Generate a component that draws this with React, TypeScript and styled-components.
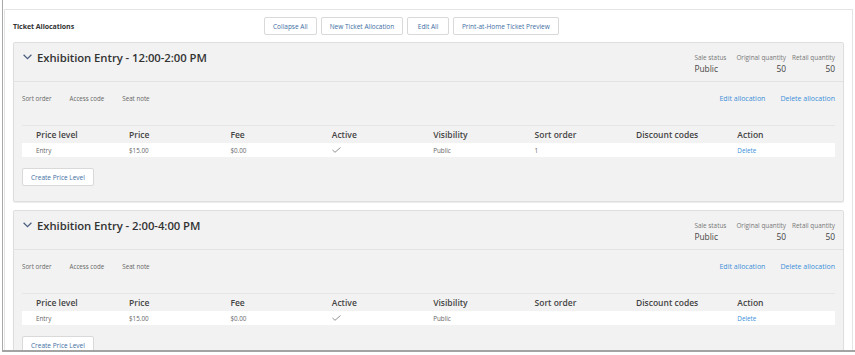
import styled, { createGlobalStyle } from 'styled-components'

const GlobalStyle = createGlobalStyle`
  html, body {
    margin: 0;
    padding: 0;
    background: #ffffff;
  }
  body {
    font-family: "Open Sans", "Noto Sans", sans-serif;
    color: #444;
  }
`

interface PriceRow {
  level: string
  price: string
  fee: string
  active: boolean
  visibility: string
  sortOrder: string
  discount: string
}

interface Allocation {
  title: string
  saleStatus: string
  original: number
  retail: number
  rows: PriceRow[]
}

const allocations: Allocation[] = [
  {
    title: 'Exhibition Entry - 12:00-2:00 PM',
    saleStatus: 'Public',
    original: 50,
    retail: 50,
    rows: [{ level: 'Entry', price: '$15.00', fee: '$0.00', active: true, visibility: 'Public', sortOrder: '1', discount: '' }],
  },
  {
    title: 'Exhibition Entry - 2:00-4:00 PM',
    saleStatus: 'Public',
    original: 50,
    retail: 50,
    rows: [{ level: 'Entry', price: '$15.00', fee: '$0.00', active: true, visibility: 'Public', sortOrder: '', discount: '' }],
  },
]

const columns = ['Price level', 'Price', 'Fee', 'Active', 'Visibility', 'Sort order', 'Discount codes', 'Action']

// outer window frame, the screenshot is cropped so the border shows on left + bottom
const Frame = styled.div`
  margin-left: 2px;
  height: 352px;
  box-sizing: border-box;
  border-left: 1px solid #a9a9a9;
  border-bottom: 2px solid #a3a3a3;
  overflow: hidden;
`

const Card = styled.div`
  margin: 9px 2px 0 1px;
  border: 1px solid #e4e4e4;
  border-bottom: none;
  padding: 0 8px 0 8px;
  background: #fff;
`

const Toolbar = styled.div`
  display: flex;
  align-items: center;
  height: 32px;
`

const CardTitle = styled.div`
  font-size: 7px;
  font-weight: 700;
  color: #333;
  width: 251px;
  letter-spacing: -0.05px;
`

const Buttons = styled.div`
  display: flex;
  gap: 4px;
`

const Button = styled.button<{ $pad?: number }>`
  font-family: inherit;
  font-size: 6.5px;
  color: #3d6ea3;
  background: #fff;
  border: 1px solid #d9d9d9;
  border-radius: 2px;
  height: 18px;
  padding: 0 ${(p) => p.$pad ?? 8}px;
  cursor: pointer;
  white-space: nowrap;
`

const PanelList = styled.div`
  display: flex;
  flex-direction: column;
  gap: 8px;
`

const Panel = styled.section`
  background: #f2f2f2;
  border: 1px solid #dedede;
  border-radius: 2px;
  box-shadow: 0 1px 1px rgba(0, 0, 0, 0.08);
`

const PanelHeader = styled.div`
  display: flex;
  justify-content: space-between;
  height: 38px;
  border-bottom: 1px solid #e2e2e2;
  padding: 0 8px 0 9px;
`

const TitleRow = styled.div`
  display: flex;
  align-items: center;
  gap: 5px;
  height: 28px;
`

const Title = styled.h2`
  margin: 0;
  font-size: 11.3px;
  font-weight: 600;
  color: #333;
  letter-spacing: -0.05px;
`

const Stats = styled.div`
  display: grid;
  grid-template-columns: 36px auto auto;
  column-gap: 6px;
  padding-top: 10px;
  align-content: start;
`

const StatLabel = styled.div`
  font-size: 6.4px;
  color: #777;
  line-height: 9px;
  white-space: nowrap;
`

const StatValue = styled.div<{ $right?: boolean }>`
  font-size: 8.4px;
  color: #444;
  line-height: 14px;
  text-align: ${(p) => (p.$right ? 'right' : 'left')};
`

const PanelBody = styled.div`
  padding: 0 8px 15px 8px;
`

const FieldsRow = styled.div`
  display: flex;
  justify-content: space-between;
  align-items: center;
  height: 32px;
  margin-bottom: 11px;
`

const Fields = styled.div`
  display: flex;
  gap: 18px;
  padding-top: 1px;
`

const FieldLabel = styled.span`
  font-size: 6.2px;
  color: #666;
`

const Links = styled.div`
  display: flex;
  gap: 15px;
`

const Link = styled.a`
  font-size: 7px;
  color: #3b8fd8;
  text-decoration: none;
  cursor: pointer;
`

const Grid = styled.div<{ $head?: boolean }>`
  display: grid;
  grid-template-columns: 93px repeat(6, 101.4px) 1fr;
  align-items: center;
  height: ${(p) => (p.$head ? 17 : 14)}px;
  background: ${(p) => (p.$head ? 'transparent' : '#fff')};
  border-top: ${(p) => (p.$head ? '1px solid #e6e6e6' : 'none')};
`

const HeadCell = styled.div`
  padding-left: 14px;
  font-size: 8.5px;
  font-weight: 600;
  color: #444;
`

const Cell = styled.div`
  padding-left: 14px;
  font-size: 6.3px;
  color: #666;
`

const ActionCell = styled(Cell)`
  color: #3b8fd8;
  cursor: pointer;
`

const CreateButton = styled(Button)`
  margin-top: 11px;
  height: 18px;
  padding: 0 8px;
`

function Chevron() {
  return (
    <svg width="9" height="6" viewBox="0 0 9 6">
      <path d="M0.6 0.8 L4.5 4.6 L8.4 0.8" fill="none" stroke="#4c5f80" strokeWidth="1.3" />
    </svg>
  )
}

function Check() {
  return (
    <svg width="9" height="6" viewBox="0 0 9 6" style={{ display: 'block' }}>
      <path d="M0.5 3 L3 5.3 L8.5 0.5" fill="none" stroke="#777" strokeWidth="0.8" />
    </svg>
  )
}

function AllocationPanel({ data }: { data: Allocation }) {
  return (
    <Panel>
      <PanelHeader>
        <TitleRow>
          <Chevron />
          <Title>{data.title}</Title>
        </TitleRow>
        <Stats>
          <StatLabel>Sale status</StatLabel>
          <StatLabel>Original quantity</StatLabel>
          <StatLabel>Retail quantity</StatLabel>
          <StatValue>{data.saleStatus}</StatValue>
          <StatValue $right>{data.original}</StatValue>
          <StatValue $right>{data.retail}</StatValue>
        </Stats>
      </PanelHeader>
      <PanelBody>
        <FieldsRow>
          <Fields>
            <FieldLabel>Sort order</FieldLabel>
            <FieldLabel>Access code</FieldLabel>
            <FieldLabel>Seat note</FieldLabel>
          </Fields>
          <Links>
            <Link>Edit allocation</Link>
            <Link>Delete allocation</Link>
          </Links>
        </FieldsRow>
        <Grid $head>
          {columns.map((c) => (
            <HeadCell key={c}>{c}</HeadCell>
          ))}
        </Grid>
        {data.rows.map((r, i) => (
          <Grid key={i}>
            <Cell>{r.level}</Cell>
            <Cell>{r.price}</Cell>
            <Cell>{r.fee}</Cell>
            <Cell>{r.active ? <Check /> : null}</Cell>
            <Cell>{r.visibility}</Cell>
            <Cell>{r.sortOrder}</Cell>
            <Cell>{r.discount}</Cell>
            <ActionCell>Delete</ActionCell>
          </Grid>
        ))}
        <CreateButton>Create Price Level</CreateButton>
      </PanelBody>
    </Panel>
  )
}

export default function App() {
  return (
    <>
      <GlobalStyle />
      <Frame>
        <Card>
          <Toolbar>
            <CardTitle>Ticket Allocations</CardTitle>
            <Buttons>
              <Button>Collapse All</Button>
              <Button>New Ticket Allocation</Button>
              <Button $pad={9.5}>Edit All</Button>
              <Button>Print-at-Home Ticket Preview</Button>
            </Buttons>
          </Toolbar>
          <PanelList>
            {allocations.map((a) => (
              <AllocationPanel key={a.title} data={a} />
            ))}
          </PanelList>
        </Card>
      </Frame>
    </>
  )
}
